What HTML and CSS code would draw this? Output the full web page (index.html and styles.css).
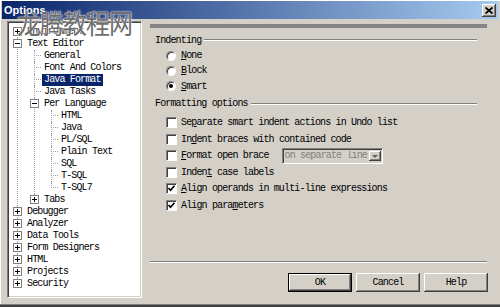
FILE: index.html
```html
<!DOCTYPE html>
<html lang="en">
<head>
    <meta charset="UTF-8" />
    <title>Options</title>
    <link rel="stylesheet" href="styles.css">
</head>
<body>
    <div class="window">
        <div class="titlebar">
            <span class="title">Options</span>
            <span class="close">
                <svg width="8" height="7" viewBox="0 0 8 7"><path d="M0.5 0.5 L7.5 6.5 M7.5 0.5 L0.5 6.5" stroke="#000" stroke-width="1.8" fill="none"/></svg>
            </span>
        </div>
        <div class="main">
            <div class="tree">
                <ul class="root">
                    <li><div class="row"><span class="twig box plus"></span><span class="label">Environment</span></div></li>
                    <li>
                        <div class="row"><span class="twig box"></span><span class="label">Text Editor</span></div>
                        <ul>
                            <li><div class="row"><span class="twig leaf"></span><span class="label">General</span></div></li>
                            <li><div class="row"><span class="twig leaf"></span><span class="label">Font And Colors</span></div></li>
                            <li><div class="row"><span class="twig leaf"></span><span class="label selected">Java Format</span></div></li>
                            <li><div class="row"><span class="twig leaf"></span><span class="label">Java Tasks</span></div></li>
                            <li>
                                <div class="row"><span class="twig box"></span><span class="label">Per Language</span></div>
                                <ul>
                                    <li><div class="row"><span class="twig leaf"></span><span class="label">HTML</span></div></li>
                                    <li><div class="row"><span class="twig leaf"></span><span class="label">Java</span></div></li>
                                    <li><div class="row"><span class="twig leaf"></span><span class="label">PL/SQL</span></div></li>
                                    <li><div class="row"><span class="twig leaf"></span><span class="label">Plain Text</span></div></li>
                                    <li><div class="row"><span class="twig leaf"></span><span class="label">SQL</span></div></li>
                                    <li><div class="row"><span class="twig leaf"></span><span class="label">T-SQL</span></div></li>
                                    <li><div class="row"><span class="twig leaf"></span><span class="label">T-SQL7</span></div></li>
                                </ul>
                            </li>
                            <li><div class="row"><span class="twig box plus"></span><span class="label">Tabs</span></div></li>
                        </ul>
                    </li>
                    <li><div class="row"><span class="twig box plus"></span><span class="label">Debugger</span></div></li>
                    <li><div class="row"><span class="twig box plus"></span><span class="label">Analyzer</span></div></li>
                    <li><div class="row"><span class="twig box plus"></span><span class="label">Data Tools</span></div></li>
                    <li><div class="row"><span class="twig box plus"></span><span class="label">Form Designers</span></div></li>
                    <li><div class="row"><span class="twig box plus"></span><span class="label">HTML</span></div></li>
                    <li><div class="row"><span class="twig box plus"></span><span class="label">Projects</span></div></li>
                    <li><div class="row"><span class="twig box plus"></span><span class="label">Security</span></div></li>
                </ul>
            </div>
            <div class="pane">
                <div class="pane-bar"></div>
                <div class="legend"><span>Indenting</span></div>
                <div class="radios">
                    <div class="opt"><span class="radio"></span><span><u>N</u>one</span></div>
                    <div class="opt"><span class="radio"></span><span><u>B</u>lock</span></div>
                    <div class="opt"><span class="radio on"></span><span><u>S</u>mart</span></div>
                </div>
                <div class="legend second"><span>Formatting options</span></div>
                <div class="checks">
                    <div class="opt"><span class="check"></span><span>Se<u>p</u>arate smart indent actions in Undo list</span></div>
                    <div class="opt"><span class="check"></span><span>In<u>d</u>ent braces with contained code</span></div>
                    <div class="opt">
                        <span class="check"></span><span><u>F</u>ormat open brace</span>
                        <span class="combo"><span class="combo-text">on separate line</span><span class="combo-arrow"></span></span>
                    </div>
                    <div class="opt"><span class="check"></span><span>Inden<u>t</u> case labels</span></div>
                    <div class="opt"><span class="check">
                        <svg width="9" height="9" viewBox="0 0 9 9"><polyline points="1.5,4 3.5,6.2 7.5,1.8" stroke="#000" stroke-width="1.7" fill="none"/></svg>
                    </span><span><u>A</u>lign operands in multi-line expressions</span></div>
                    <div class="opt"><span class="check">
                        <svg width="9" height="9" viewBox="0 0 9 9"><polyline points="1.5,4 3.5,6.2 7.5,1.8" stroke="#000" stroke-width="1.7" fill="none"/></svg>
                    </span><span>Align para<u>m</u>eters</span></div>
                </div>
                <div class="separator"></div>
                <div class="buttons">
                    <button class="btn default">OK</button>
                    <button class="btn">Cancel</button>
                    <button class="btn">Help</button>
                </div>
            </div>
        </div>
        <div class="watermark">龙腾教程网</div>
    </div>
</body>
</html>
```

FILE: styles.css
```css
:root {
    --face: #d4d0c8;
    --shadow: #808080;
    --dark: #404040;
    --ui-font: "Liberation Mono", "DejaVu Sans Mono", monospace;
}

body {
    margin: 0;
    background: var(--face);
}

.window {
    position: relative;
    width: 500px;
    height: 307px;
    box-sizing: border-box;
    padding: 1px 2px 0 2px;
    background: var(--face);
    border-bottom: 2px solid var(--dark);
    box-shadow: inset 0 -1px 0 var(--shadow), inset 1px 1px 0 #fff;
    display: flex;
    flex-direction: column;
    font-family: var(--ui-font);
    font-size: 10px;
    letter-spacing: -0.85px;
    color: #000;
}

/* title bar */
.titlebar {
    height: 18px;
    flex: none;
    display: flex;
    align-items: center;
    justify-content: space-between;
    padding: 0 2px 0 2px;
    background: linear-gradient(to right, #0a246a, #a6caf0);
}

.title {
    font-family: "Liberation Sans", Arial, sans-serif;
    font-weight: bold;
    font-size: 11px;
    letter-spacing: 0;
    color: #fff;
}

.close {
    width: 14px;
    height: 13px;
    box-sizing: border-box;
    display: flex;
    align-items: center;
    justify-content: center;
    background: var(--face);
    box-shadow: inset -1px -1px 0 var(--dark), inset 1px 1px 0 #fff, inset -2px -2px 0 var(--shadow);
}

.close svg {
    display: block;
}

/* body */
.main {
    flex: 1;
    display: flex;
    gap: 8px;
    padding: 2px 10px 0 5px;
}

.tree {
    width: 135px;
    height: 277px;
    flex: none;
    box-sizing: border-box;
    padding-top: 3.5px;
    background: #fff;
    border: 1px solid;
    border-color: var(--shadow) #fff #fff var(--shadow);
    box-shadow: inset 1px 1px 0 var(--dark), inset -1px -1px 0 var(--face);
    overflow: hidden;
}

.tree ul {
    list-style: none;
    margin: 0;
    padding: 0;
}

.tree ul ul {
    margin-left: 17px;
}

.tree li {
    position: relative;
}

.tree li::before {
    content: "";
    position: absolute;
    left: 9px;
    top: 0;
    bottom: 0;
    border-left: 1px dotted #a0a0a0;
}

.tree li:last-child::before {
    bottom: auto;
    height: 6px;
}

.tree .root > li:first-child::before {
    top: 6px;
}

.row {
    height: 12px;
    display: flex;
    align-items: center;
}

.twig {
    position: relative;
    width: 9px;
    height: 9px;
    flex: none;
    box-sizing: border-box;
    margin: 0 3px 0 5px;
}

.twig.box {
    border: 1px solid var(--shadow);
    background: #fff;
}

.twig.box::before {
    content: "";
    position: absolute;
    left: 1px;
    top: 3px;
    width: 5px;
    height: 1px;
    background: #000;
}

.twig.plus::after {
    content: "";
    position: absolute;
    left: 3px;
    top: 1px;
    width: 1px;
    height: 5px;
    background: #000;
}

.twig.leaf::before {
    content: "";
    position: absolute;
    left: 4px;
    top: 4px;
    width: 7px;
    border-top: 1px dotted #a0a0a0;
}

.label {
    height: 12px;
    line-height: 12px;
    padding: 0 2px;
    white-space: nowrap;
}

.label.selected {
    background: #0a246a;
    color: #fff;
}

/* right pane */
.pane {
    flex: 1;
    display: flex;
    flex-direction: column;
}

.pane-bar {
    height: 4px;
    margin: 3px 1px 0 0;
    background: #858585;
}

.legend {
    height: 12px;
    margin-top: 6px;
    display: flex;
    align-items: center;
}

.legend span {
    padding-left: 5px;
}

.legend::after {
    content: "";
    flex: 1;
    margin: 0 11px 0 3px;
    border-top: 1px solid var(--shadow);
    border-bottom: 1px solid #fff;
}

.legend.second {
    margin-top: 4px;
}

.radios {
    margin-top: 2px;
}

.checks {
    margin-top: 4.5px;
}

.opt {
    display: flex;
    align-items: center;
    padding-left: 16px;
    white-space: nowrap;
}

.radios .opt {
    height: 15.3px;
}

.checks .opt {
    height: 16.5px;
}

.radio {
    position: relative;
    width: 10px;
    height: 10px;
    box-sizing: border-box;
    margin-right: 5px;
    border-radius: 50%;
    background: #fff;
    border: 1px solid;
    border-color: var(--shadow) #fff #fff var(--shadow);
    box-shadow: inset 1px 1px 0 var(--dark);
}

.radio.on::after {
    content: "";
    position: absolute;
    left: 2px;
    top: 2px;
    width: 4px;
    height: 4px;
    border-radius: 50%;
    background: #000;
}

.check {
    width: 11px;
    height: 11px;
    flex: none;
    box-sizing: border-box;
    margin-right: 4px;
    background: #fff;
    border: 1px solid;
    border-color: var(--shadow) #fff #fff var(--shadow);
    box-shadow: inset 1px 1px 0 var(--dark);
    display: flex;
    align-items: center;
    justify-content: center;
}

.check svg {
    display: block;
}

.combo {
    width: 101px;
    height: 16px;
    margin-left: 13px;
    box-sizing: border-box;
    display: flex;
    border: 1px solid;
    border-color: var(--shadow) #fff #fff var(--shadow);
    box-shadow: inset 1px 1px 0 var(--dark), inset -1px -1px 0 var(--face);
    background: var(--face);
    padding: 2px 1px 2px 2px;
}

.combo-text {
    flex: 1;
    color: var(--shadow);
    line-height: 10px;
    overflow: hidden;
}

.combo-arrow {
    position: relative;
    width: 12px;
    box-shadow: inset -1px -1px 0 var(--dark), inset 1px 1px 0 #fff, inset -2px -2px 0 var(--shadow);
}

.combo-arrow::after {
    content: "";
    position: absolute;
    left: 3px;
    top: 4px;
    border-top: 3px solid #606060;
    border-left: 3px solid transparent;
    border-right: 3px solid transparent;
}

.separator {
    margin: auto 1px 0 0;
    border-top: 1px solid var(--shadow);
    border-bottom: 1px solid #fff;
}

.buttons {
    display: flex;
    justify-content: flex-end;
    gap: 4px;
    margin-top: 10px;
    padding-bottom: 13px;
}

.btn {
    width: 64px;
    height: 19px;
    box-sizing: border-box;
    padding: 0;
    font: inherit;
    letter-spacing: inherit;
    color: #000;
    background: var(--face);
    border: none;
    box-shadow: inset -1px -1px 0 var(--dark), inset 1px 1px 0 #fff, inset -2px -2px 0 var(--shadow);
}

.btn.default {
    border: 1px solid #000;
}

.watermark {
    position: absolute;
    left: 17px;
    top: 9px;
    font-family: "Noto Sans CJK SC", sans-serif;
    font-size: 24px;
    line-height: 24px;
    letter-spacing: -1px;
    color: #6e6e6e;
    transform: scaleY(1.15);
    transform-origin: top left;
    text-shadow: 0 0 1px #fff, 0 0 2px #fff;
    pointer-events: none;
}
```
